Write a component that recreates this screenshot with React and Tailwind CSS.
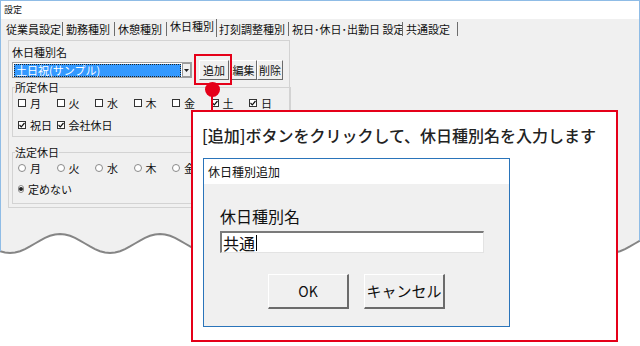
import React from "react";

const tabs = [
  { label: "従業員設定", w: "w-[61px]", pl: "pl-[4px]" },
  { label: "勤務種別", w: "w-[52px]", pl: "pl-[3px]" },
  { label: "休憩種別", w: "w-[52px]", pl: "pl-[3px]" },
  { label: "休日種別", w: "w-[50px]", pl: "pl-[3px]", active: true },
  { label: "打刻調整種別", w: "w-[72px]", pl: "pl-[2px]" },
  { label: "祝日･休日･出勤日 設定", w: "w-[114px]", pl: "pl-[3px]" },
  { label: "共通設定", w: "w-[55px]", pl: "pl-[3px]" },
];

const days = ["月", "火", "水", "木", "金", "土", "日"];

function Check({ checked, label }) {
  return (
    <div className="flex h-[14px] w-[38.5px] shrink-0 items-center">
      <span className="flex h-[8px] w-[8px] items-center justify-center border border-[#333] bg-white">
        {checked && (
          <svg width="6" height="6" viewBox="0 0 6 6">
            <path d="M0.5 3 L2.3 4.8 L5.5 1" fill="none" stroke="#111" strokeWidth="1.2" />
          </svg>
        )}
      </span>
      <span className="ml-[4px] whitespace-nowrap text-[11px] leading-[14px]">{label}</span>
    </div>
  );
}

function Radio({ checked, label }) {
  return (
    <div className="flex h-[14px] w-[38.5px] shrink-0 items-center">
      <span className="flex h-[8px] w-[8px] items-center justify-center rounded-full border border-[#8a8a8a] bg-white">
        {checked && <span className="h-[4px] w-[4px] rounded-full bg-[#222]" />}
      </span>
      <span className="ml-[4px] whitespace-nowrap text-[11px] leading-[14px]">{label}</span>
    </div>
  );
}

function waveY(x) {
  return 243.5 - 9.5 * Math.cos((2 * Math.PI * (x - 60)) / 100) - 226;
}

const wavePts = Array.from({ length: 129 }, (_, i) => `${i * 5},${waveY(i * 5).toFixed(2)}`).join(" ");

function SmallButton({ children, w }) {
  return (
    <div
      className={`flex h-[20px] ${w} items-center justify-center border border-t-white border-l-white border-r-[#6b6b6b] border-b-[#6b6b6b] bg-[#f0f0f0] text-[11px]`}
    >
      {children}
    </div>
  );
}

export default function App() {
  return (
    <div className="relative h-[346px] w-[640px] overflow-hidden bg-white font-['Noto_Sans_CJK_JP',sans-serif] text-[#111]">
      {/* window */}
      <div className="h-[226px] border-x border-t border-[#8fbce6] bg-[#f0f0f0]">
        <div className="h-[18px] bg-white pl-[3px] text-[9px] leading-[18px]">設定</div>

        {/* tabs */}
        <div className="flex h-[18px] items-end pl-[1px]">
          {tabs.map((t) => (
            <div
              key={t.label}
              className={`${t.w} ${t.pl} flex shrink-0 items-center overflow-hidden whitespace-nowrap border-r border-[#6d6d6d] text-[11px] ${
                t.active ? "h-[18px] pb-[3px]" : "mb-[1px] h-[14px]"
              }`}
            >
              {t.label}
            </div>
          ))}
        </div>

        {/* body */}
        <div className="pl-[7px] pt-[3px]">
          <div className="h-[168px] w-[282px] border border-[#d3d3d3] px-[3px]">
            <div className="mt-[4px] text-[11px] leading-[14px]">休日種別名</div>
            <div className="mt-[1px] flex items-start">
              <div className="mt-[2px] flex h-[16px] w-[180px] items-center border border-[#a0a0a0] bg-white">
                <div className="ml-[1px] flex h-[13px] w-[168px] items-center border border-dotted border-[#222] bg-[#3399ff] pl-[1px] text-[11px] text-white">
                  土日祝(サンプル)
                </div>
                <div className="ml-[1px] flex h-[14px] w-[9px] items-center justify-center border border-[#9a9a9a] bg-[#f0f0f0]">
                  <svg width="5" height="3" viewBox="0 0 5 3">
                    <path d="M0 0 L5 0 L2.5 3 Z" fill="#222" />
                  </svg>
                </div>
              </div>
              <div className="ml-[7px] flex">
                <SmallButton w="w-[30px]">追加</SmallButton>
                <div className="ml-[1px]">
                  <SmallButton w="w-[27px]">編集</SmallButton>
                </div>
                <SmallButton w="w-[26px]">削除</SmallButton>
              </div>
            </div>

            <fieldset className="mt-[1px] w-[275px] border border-[#d3d3d3] px-[2px] pb-[4px]">
              <legend className="px-0 text-[11px] leading-[12px]">所定休日</legend>
              <div className="mt-[3px] flex pl-[3px]">
                {days.map((d, i) => (
                  <Check key={d} label={d} checked={i >= 5} />
                ))}
              </div>
              <div className="mt-[8px] flex pl-[3px]">
                <Check label="祝日" checked />
                <Check label="会社休日" checked />
              </div>
            </fieldset>

            <fieldset className="mt-[9px] w-[275px] border border-[#d3d3d3] px-[2px] pb-[7px]">
              <legend className="px-0 text-[11px] leading-[12px]">法定休日</legend>
              <div className="mt-[3px] flex pl-[3px]">
                {days.map((d) => (
                  <Radio key={d} label={d} />
                ))}
              </div>
              <div className="mt-[7px] flex pl-[3px]">
                <Radio label="定めない" checked />
              </div>
            </fieldset>
          </div>
        </div>
      </div>

      {/* torn bottom edge */}
      <svg width="640" height="34" viewBox="0 0 640 34" className="block">
        <polygon points={`0,0 ${wavePts} 640,0`} fill="#f0f0f0" />
        <polyline points={wavePts} fill="none" stroke="#858585" strokeWidth="2" />
        <line x1="0.5" y1="0" x2="0.5" y2={waveY(0)} stroke="#8fbce6" />
        <line x1="639.5" y1="0" x2="639.5" y2={waveY(640)} stroke="#8fbce6" />
      </svg>

      {/* annotation: highlight on 追加 */}
      <div className="absolute left-[194px] top-[54px] h-[31px] w-[38px] border-2 border-[#e50019]" />
      <div className="absolute left-[211px] top-[89px] h-[22px] w-[2px] bg-[#e50019]" />
      <div className="absolute left-[205px] top-[82px] h-[15px] w-[15px] rounded-full bg-[#e50019]" />

      {/* callout */}
      <div className="absolute left-[191px] top-[110px] h-[232px] w-[427px] border-2 border-[#e50019] bg-white">
        <div className="pl-[9px] pt-[13px] text-[16px] font-medium leading-[20px] text-[#222]">
          [追加]ボタンをクリックして、休日種別名を入力します
        </div>
        <div className="ml-[10px] mt-[13px] flex h-[169px] w-[307px] flex-col border border-[#2a74ba]">
          <div className="h-[25px] bg-white pl-[4px] text-[12px] leading-[25px]">休日種別追加</div>
          <div className="flex-1 bg-[#f0f0f0] pl-[16px] pt-[22px]">
            <div className="text-[16px] leading-[20px]">休日種別名</div>
            <div className="mt-[5px] flex h-[22px] w-[264px] items-center border-b border-l-2 border-r border-t-2 border-b-[#e3e3e3] border-l-[#7a7a7a] border-r-[#e3e3e3] border-t-[#7a7a7a] bg-white pl-[1px] text-[16px] leading-[18px]">
              共通
              <span className="ml-[1px] h-[16px] w-[1px] bg-black" />
            </div>
            <div className="ml-[-16px] mt-[21px] flex justify-center gap-[15px]">
              <div className="flex h-[35px] w-[81px] items-center justify-center border-b-2 border-l border-r-2 border-t border-b-[#6b6b6b] border-l-white border-r-[#6b6b6b] border-t-white text-[14px]">
                OK
              </div>
              <div className="flex h-[35px] w-[81px] items-center justify-center border-b-2 border-l border-r-2 border-t border-b-[#6b6b6b] border-l-white border-r-[#6b6b6b] border-t-white text-[15px]">
                キャンセル
              </div>
            </div>
          </div>
        </div>
      </div>
    </div>
  );
}
